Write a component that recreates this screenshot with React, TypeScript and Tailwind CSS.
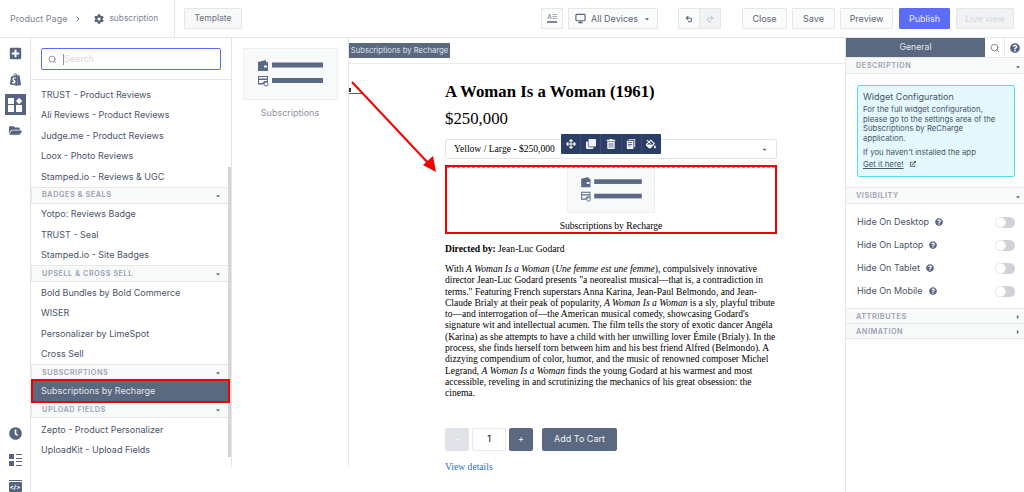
import React from "react";
import { FaCog, FaShopify, FaClock, FaQuestionCircle, FaTrashAlt, FaClone, FaArrowsAlt, FaFolderOpen, FaPlusSquare, FaCaretDown, FaCaretRight, FaFillDrip, FaExternalLinkAlt } from "react-icons/fa";
import { Search, ChevronRight, Monitor, Undo2, Redo2 } from "lucide-react";

const Items1 = ["TRUST - Product Reviews", "Ali Reviews - Product Reviews", "Judge.me - Product Reviews", "Loox - Photo Reviews", "Stamped.io - Reviews & UGC"];
const Items2 = ["Yotpo: Reviews Badge", "TRUST - Seal", "Stamped.io - Site Badges"];
const Items3 = ["Bold Bundles by Bold Commerce", "WISER", "Personalizer by LimeSpot", "Cross Sell"];
const Items4 = ["Zepto - Product Personalizer", "UploadKit - Upload Fields", "Product Options and Customizer"];

function Item({ t }: { t: string }) {
  return <div className="h-[20.5px] pl-[10px] flex items-center text-[9px] text-[#4a5468] whitespace-nowrap">{t}</div>;
}
function Head({ t }: { t: string }) {
  return (
    <div className="h-[17px] pt-[1px] pl-[10px] pr-[7px] flex items-center justify-between bg-[#f8f9f9] border-y border-l border-[#e6e8ea] text-[7.3px] font-semibold tracking-[0.55px] text-[#9aa1b1] mr-[3px]">
      <span>{t}</span>
      <FaCaretDown className="w-[6px] h-[6px] text-[#5a6a85]" />
    </div>
  );
}
function WidgetIcons({ className }: { className: string }) {
  return (
    <svg viewBox="0 0 66 30" className={className} fill="#5a6a85">
      <path d="M1 3 L9 1 L9 3 L11 3 L11 12 L1 12 Z" />
      <rect x="7" y="6.5" width="3" height="2" fill="#f8f9f9" />
      <rect x="15" y="3.5" width="51" height="5" />
      <path d="M1 17 H11 V23 H8 L6 25.5 H1 Z M2 18 V19.5 H10 V18 Z M2 21 V24 H5.5 L7 22 H10 V21 Z" fillRule="evenodd" />
      <circle cx="9" cy="25" r="2" fill="none" stroke="#5a6a85" strokeWidth="1" />
      <rect x="15" y="19" width="51" height="5" />
    </svg>
  );
}
function PagesIcon({ className }: { className?: string }) {
  return (
    <svg viewBox="0 0 12 12" className={className} fill="currentColor">
      <path d="M3 0 H11 V10 H10 V1 H3 Z" />
      <path d="M1 2 H9 V12 H1 Z M2.5 4 V4.8 H7.5 V4 Z M2.5 6 V6.8 H7.5 V6 Z M2.5 8 V8.8 H6 V8 Z" fillRule="evenodd" />
    </svg>
  );
}
function Btn({ t, w, extra }: { t: string; w: string; extra?: string }) {
  return <div className={`h-[21px] ${w} flex items-center justify-center border border-[#e4e6e8] bg-[#fafbfb] rounded-[1px] text-[#5c6577] text-[9px] whitespace-nowrap ${extra ?? ""}`}>{t}</div>;
}
function SecHead({ t, right, h = "h-[16px]" }: { t: string; right?: boolean; h?: string }) {
  return (
    <div className={`${h} pt-[2px] pl-[10px] pr-[3px] flex items-center justify-between bg-[#f8f9f9] border-b border-[#e6e8ea] text-[7.3px] font-semibold tracking-[0.55px] text-[#9aa1b1]`}>
      <span>{t}</span>
      {right ? <FaCaretRight className="w-[6px] h-[6px] text-[#5a6a85]" /> : <FaCaretDown className="w-[6px] h-[6px] text-[#5a6a85]" />}
    </div>
  );
}
function Toggle({ t, mt }: { t: string; mt: string }) {
  return (
    <div className={`flex items-center h-[12px] ${mt} pl-[11px] pr-[9px]`}>
      <span className="text-[9px] text-[#4a5468] whitespace-nowrap">{t}</span>
      <FaQuestionCircle className="ml-[6px] w-[8px] h-[8px] text-[#5a6a85]" />
      <div className="ml-auto w-[20px] h-[11px] rounded-full bg-[#cfd2d9] relative">
        <div className="absolute left-0 top-0 w-[11px] h-[11px] rounded-full bg-white border border-[#eeeff1]" />
      </div>
    </div>
  );
}
const lines: React.ReactNode[] = [
  <>With <i>A Woman Is a Woman</i> (<i>Une femme est une femme</i>), compulsively innovative</>,
  <>director Jean-Luc Godard presents "a neorealist musical—that is, a contradiction in</>,
  <>terms." Featuring French superstars Anna Karina, Jean-Paul Belmondo, and Jean-</>,
  <>Claude Brialy at their peak of popularity, <i>A Woman Is a Woman</i> is a sly, playful tribute</>,
  <>to—and interrogation of—the American musical comedy, showcasing Godard's</>,
  <>signature wit and intellectual acumen. The film tells the story of exotic dancer Angéla</>,
  <>(Karina) as she attempts to have a child with her unwilling lover Émile (Brialy). In the</>,
  <>process, she finds herself torn between him and his best friend Alfred (Belmondo). A</>,
  <>dizzying compendium of color, humor, and the music of renowned composer Michel</>,
  <>Legrand, <i>A Woman Is a Woman</i> finds the young Godard at his warmest and most</>,
  <>accessible, reveling in and scrutinizing the mechanics of his great obsession: the</>,
  <>cinema.</>,
];

export default function App() {
  return (
    <div className="relative w-[1024px] h-[492px] overflow-hidden bg-white flex flex-col font-['Inter',sans-serif]">
      {/* Top bar */}
      <header className="h-[38px] shrink-0 flex items-center border-b border-[#e3e5e7]">
        <div className="w-[175px] h-full flex items-center pl-[10px] border-r border-[#e3e5e7] text-[9px] text-[#7d8594] whitespace-nowrap">
          <span>Product Page</span>
          <ChevronRight className="ml-[7px] w-[8px] h-[8px] text-[#6b7485]" strokeWidth={3} />
          <FaCog className="ml-[12px] w-[10px] h-[10px] text-[#55647f]" />
          <span className="ml-[5px] text-[8.4px]">subscription</span>
        </div>
        <Btn t="Template" w="w-[58px] ml-[9px]" extra="!bg-[#f7f8f8] !text-[#6a7282] !text-[8.5px]" />
        <div className="ml-[299px] w-[22px] h-[21px] flex flex-col items-center justify-center border border-[#e4e6e8] bg-[#fafbfb]">
          <span className="text-[6px] leading-[6px] text-[#5a6a85]">A☰</span>
          <span className="w-[10px] h-[2px] mt-[1px] border-y border-[#7b869b]" />
        </div>
        <div className="ml-[5px] w-[90px] h-[21px] flex items-center pl-[6px] border border-[#e4e6e8] bg-[#fafbfb] text-[9px] text-[#5c6577] whitespace-nowrap">
          <Monitor className="w-[11px] h-[11px] text-[#55647f]" strokeWidth={2.5} />
          <span className="ml-[5px]">All Devices</span>
          <FaCaretDown className="ml-[6px] w-[6px] h-[6px]" />
        </div>
        <div className="ml-[20px] w-[22px] h-[21px] flex items-center justify-center border border-[#e4e6e8] bg-[#fafbfb]">
          <Undo2 className="w-[8px] h-[8px] text-[#5a6a85]" strokeWidth={3.5} />
        </div>
        <div className="w-[21px] h-[21px] flex items-center justify-center border-y border-r border-[#e4e6e8] bg-[#f1f2f4]">
          <Redo2 className="w-[8px] h-[8px] text-[#c6cad2]" strokeWidth={3.5} />
        </div>
        <Btn t="Close" w="w-[45px] ml-[21px]" />
        <Btn t="Save" w="w-[43px] ml-[5px]" />
        <Btn t="Preview" w="w-[53px] ml-[5px]" />
        <Btn t="Publish" w="w-[51px] ml-[6px]" extra="!bg-[#5c6cf5] !border-[#5c6cf5] !text-[#eef0ff]" />
        <Btn t="Live view" w="w-[58px] ml-[6px]" extra="!bg-[#f1f2f4] !text-[#d4d7dc]" />
      </header>

      <div className="flex-1 flex min-h-0">
        {/* Rail */}
        <nav className="w-[31px] shrink-0 border-r border-[#e3e5e7] flex flex-col items-center pt-[9px] text-[#55647f]">
          <FaPlusSquare className="w-[13px] h-[13px]" />
          <FaShopify className="mt-[13px] w-[13px] h-[13px]" />
          <div className="mt-[8px] w-[21px] h-[21px] bg-[#55647f] grid grid-cols-2 gap-[1.5px] p-[3.5px]">
            <span className="bg-white" />
            <span className="bg-white rotate-45 scale-75" />
            <span className="bg-white" />
            <span className="bg-white" />
          </div>
          <FaFolderOpen className="mt-[9px] w-[13px] h-[13px]" />
          <FaClock className="mt-auto w-[13px] h-[13px]" />
          <div className="mt-[14px] w-[13px] h-[12px] grid grid-cols-2 gap-[2px]">
            <span className="bg-[#55647f]" />
            <span className="border-y border-[#55647f]" />
            <span className="bg-[#55647f]" />
            <span className="border-y border-[#55647f]" />
          </div>
          <div className="mt-[14px] w-[13px] h-[12px] border-t border-[#55647f] pt-[1px]">
            <div className="h-full bg-[#55647f] rounded-[1px] flex items-center justify-center text-[6px] leading-[8px] font-bold text-white">&lt;/&gt;</div>
          </div>
        </nav>

        {/* Widget list + preview panels */}
        <div className="h-[429px] w-[318px] shrink-0 flex">
          <div className="relative w-[201px] border-r border-[#e3e5e7] flex flex-col overflow-hidden">
            <div className="h-[42px] shrink-0 border-b border-[#e3e5e7] pl-[10px] pr-[10px] pt-[10px]">
              <div className="h-[22px] w-[180px] border-[1.5px] border-[#5c6cf5] rounded-[2px] flex items-center pl-[6px]">
                <Search className="w-[9px] h-[9px] text-[#6b7485]" />
                <span className="ml-[6px] w-px h-[11px] bg-[#8a92a0]" />
                <span className="text-[9px] text-[#d5d8dd]">Search</span>
              </div>
            </div>
            <div className="pt-[4px]">
              {Items1.map((t) => <Item key={t} t={t} />)}
              <Head t="BADGES & SEALS" />
              {Items2.map((t) => <Item key={t} t={t} />)}
              <Head t="UPSELL & CROSS SELL" />
              {Items3.map((t) => <Item key={t} t={t} />)}
              <Head t="SUBSCRIPTIONS" />
              <div className="relative z-10 h-[24px] -my-[2px] mr-[1px] pl-[8px] flex items-center bg-[#5a6880] border-2 border-[#f00000] text-[9px] text-[#e3e6ec] whitespace-nowrap">Subscriptions by Recharge</div>
              <Head t="UPLOAD FIELDS" />
              <div className="h-px" />
              {Items4.map((t) => <Item key={t} t={t} />)}
            </div>
            <div className="absolute right-0 top-[129px] bottom-[10px] w-[3px] bg-[#d3d6dc]" />
          </div>
          <div className="w-[117px] border-r border-[#e3e5e7] px-[11px] pt-[10px] flex flex-col items-center">
            <div className="w-[95px] h-[52px] bg-[#f8f9f9] border border-[#eceef0] flex items-center justify-center">
              <WidgetIcons className="w-[66px] h-[30px]" />
            </div>
            <span className="mt-[6px] text-[9px] text-[#8b92a0]">Subscriptions</span>
          </div>
        </div>

        {/* Canvas */}
        <main className="flex-1 relative min-w-0 overflow-hidden">
          <div className="h-[26px] border-b border-[#e9ebed] pt-[5px]">
            <div className="w-[101px] h-[15px] bg-[#5a6880] flex items-center justify-center text-[7.7px] text-[#dfe3ea] whitespace-nowrap">Subscriptions by Recharge</div>
          </div>
          <div className="absolute left-0 top-[50px] w-[13px] h-[6px] border-b border-[#55606f]">
            <div className="w-[2px] h-[4px] bg-[#333]" />
          </div>
          <div className="ml-[96px] w-[332px] font-['Liberation_Serif',serif] text-black">
            <h1 className="mt-[18px] text-[16.8px] leading-[20px] font-bold whitespace-nowrap">A Woman Is a Woman (1961)</h1>
            <p className="mt-[6px] text-[16.8px] leading-[22px]">$250,000</p>
            <div className="mt-[9px] h-[20px] border border-[#e3e5e7] rounded-[2px] flex items-center justify-between pl-[8px] pr-[8px] text-[9.6px]">
              <span>Yellow / Large - $250,000</span>
              <FaCaretDown className="w-[7px] h-[7px] text-[#5a6a85]" />
            </div>
            <div className="mt-[6px] h-[69px] border-2 border-[#f00000] relative flex flex-col items-center">
              <div className="absolute inset-x-0 top-0 border-t border-dashed border-[#8f8ff0]" />
              <div className="w-[88px] h-[48px] bg-[#f8f9f9] border border-[#eceef0] flex items-center justify-center">
                <WidgetIcons className="w-[62px] h-[28px]" />
              </div>
              <span className="mt-[7px] text-[9.6px] leading-[12px] whitespace-nowrap">Subscriptions by Recharge</span>
            </div>
            <p className="mt-[9px] text-[9.6px] leading-[12px]"><b>Directed by:</b> Jean-Luc Godard</p>
            <div className="mt-[8px] text-[9.55px] leading-[11.3px] whitespace-nowrap">
              {lines.map((l, i) => <div key={i}>{l}</div>)}
            </div>
            <div className="mt-[29px] flex items-center font-['Inter',sans-serif]">
              <div className="w-[24px] h-[23px] rounded-[2px] bg-[#e0e3e7] flex items-center justify-center text-[9px] text-white">-</div>
              <div className="ml-[3px] w-[34px] h-[23px] rounded-[2px] border border-[#e8e9ec] flex items-center justify-center text-[9px] text-black">1</div>
              <div className="ml-[3px] w-[24px] h-[23px] rounded-[2px] bg-[#5a6880] flex items-center justify-center text-[9px] text-white">+</div>
              <div className="ml-[9px] w-[75px] h-[23px] rounded-[2px] bg-[#5a6880] flex items-center justify-center text-[9px] text-[#f0f2f5]">Add To Cart</div>
            </div>
            <p className="mt-[9px] text-[9.6px] text-[#2a73c8]">View details</p>
          </div>
          {/* Floating widget toolbar */}
          <div className="absolute left-[212px] top-[96px] w-[100px] h-[20px] bg-[#2c3e66] rounded-[1px] flex items-center text-[#f0f2f6]">
            {[FaArrowsAlt, FaClone, FaTrashAlt, PagesIcon, FaFillDrip].map((Ic, i) => (
              <div key={i} className="flex-1 h-full flex items-center justify-center border-r last:border-r-0 border-[#3c4e76]">
                <Ic className="w-[10px] h-[10px]" />
              </div>
            ))}
          </div>
        </main>

        {/* Right panel */}
        <aside className="w-[179px] shrink-0 border-l border-[#e3e5e7] flex flex-col">
          <div className="h-[20px] flex border-b border-[#e6e8ea]">
            <div className="w-[139px] bg-[#5a6880] flex items-center justify-center text-[8.7px] text-[#e3e6ec]">General</div>
            <div className="w-[20px] flex items-center justify-center border-r border-[#e6e8ea]"><Search className="w-[10px] h-[10px] text-[#6b7485]" /></div>
            <div className="flex-1 flex items-center justify-center"><FaQuestionCircle className="w-[10px] h-[10px] text-[#55647f]" /></div>
          </div>
          <SecHead t="DESCRIPTION" />
          <div className="mx-[11px] mt-[11px] w-[158px] h-[92px] bg-[#e4f8fe] border border-[#55dcec] rounded-[2px] px-[5px] pt-[4px] text-[#4a5468]">
            <p className="text-[9px] leading-[14px]">Widget Configuration</p>
            <p className="mt-[1px] text-[7.8px] leading-[9.7px] whitespace-nowrap">For the full widget configuration,<br />please go to the settings area of the<br />Subscriptions by ReCharge<br />application.</p>
            <p className="mt-[3px] text-[7.8px] leading-[10px] whitespace-nowrap">If you haven't installed the app</p>
            <p className="mt-[2px] text-[7.8px] leading-[10px] flex items-center"><span className="underline">Get it here!</span><FaExternalLinkAlt className="ml-[6px] w-[6px] h-[6px]" /></p>
          </div>
          <div className="mt-[10px] border-t border-[#e6e8ea]"><SecHead t="VISIBILITY" /></div>
          <Toggle t="Hide On Desktop" mt="mt-[12px]" />
          <Toggle t="Hide On Laptop" mt="mt-[11px]" />
          <Toggle t="Hide On Tablet" mt="mt-[11px]" />
          <Toggle t="Hide On Mobile" mt="mt-[11px]" />
          <div className="mt-[11px] border-t border-[#e6e8ea]"><SecHead t="ATTRIBUTES" right h="h-[15px]" /></div>
          <SecHead t="ANIMATION" right h="h-[15px]" />
        </aside>
      </div>

      {/* Annotation arrow */}
      <svg className="absolute left-0 top-0 pointer-events-none" width="1024" height="492">
        <line x1="352" y1="82" x2="430" y2="165" stroke="#f00000" strokeWidth="2" />
        <polygon points="436,172 423,165 433,156" fill="#f00000" />
      </svg>
    </div>
  );
}
